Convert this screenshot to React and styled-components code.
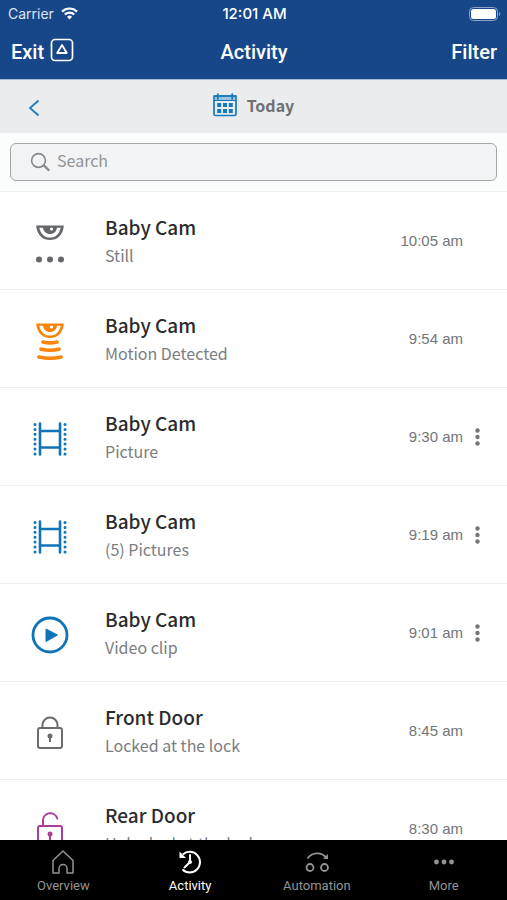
import React, { useState } from "react";
import styled, { createGlobalStyle } from "styled-components";

const GlobalStyle = createGlobalStyle`
  * {
    box-sizing: border-box;
  }

  body {
    margin: 0;
    background: #ffffff;
    font-family: "Noto Sans CJK SC", "Noto Sans", sans-serif;
  }

  button, input {
    font: inherit;
    color: inherit;
  }

  svg {
    display: block;
    flex-shrink: 0;
  }
`;

const Screen = styled.div`
  display: flex;
  flex-direction: column;
  height: 100vh;
  overflow: hidden;
`;

const Header = styled.header`
  background: #174789;
  color: #ffffff;
  border-bottom: 1px solid #9fbcdc;
`;

const StatusBar = styled.div`
  display: grid;
  grid-template-columns: 1fr auto 1fr;
  align-items: center;
  height: 27px;
  padding: 0 6px 0 8px;
  font-family: Inter, "Liberation Sans", sans-serif;
  font-size: 14px;
`;

const Carrier = styled.div`
  display: flex;
  align-items: center;
  gap: 7px;
  color: #dbe5f2;
`;

const Clock = styled.div`
  font-size: 15px;
  font-weight: 500;
`;

const Battery = styled.div`
  justify-self: end;
`;

const NavBar = styled.div`
  display: grid;
  grid-template-columns: 1fr auto 1fr;
  align-items: center;
  height: 52px;
  padding: 0 10px 2px 11px;
`;

const NavButton = styled.button`
  display: flex;
  align-items: center;
  gap: 6px;
  justify-self: ${(props) => (props.$end ? "end" : "start")};
  padding: 0;
  border: 0;
  background: none;
  font-family: Roboto, sans-serif;
  font-size: 20px;
  font-weight: 500;
  line-height: 24px;

  svg {
    margin-bottom: 5px;
  }
`;

const Title = styled.h1`
  margin: 0;
  font-family: Roboto, sans-serif;
  font-size: 20px;
  font-weight: 500;
  line-height: 24px;
`;

const DateBar = styled.div`
  display: grid;
  grid-template-columns: 1fr auto 1fr;
  align-items: center;
  height: 53px;
  padding: 0 20px;
  background: #ebecee;
`;

const BackButton = styled.button`
  justify-self: start;
  padding: 10px 8px 8px;
  border: 0;
  background: none;
`;

const DateButton = styled.button`
  display: flex;
  align-items: center;
  gap: 10px;
  padding: 0 0 3px;
  border: 0;
  background: none;
  color: #6f7173;
  font-size: 16px;
  font-weight: 700;
  line-height: 24px;
`;

const SearchArea = styled.div`
  padding: 10px;
  background: #fbfcfc;
  border-bottom: 1px solid #f0f1f1;
`;

const SearchBox = styled.label`
  display: flex;
  align-items: center;
  gap: 7px;
  height: 38px;
  padding: 0 19px;
  border: 1px solid #a3a5a6;
  border-radius: 6px;
  background: #f2f3f4;
`;

const SearchInput = styled.input`
  flex: 1;
  min-width: 0;
  padding: 0 0 4px;
  border: 0;
  outline: 0;
  background: none;
  font-size: 16px;
  line-height: 24px;
  color: #55585a;

  &::placeholder {
    color: #929496;
    opacity: 1;
  }
`;

const List = styled.ul`
  flex: 1;
  min-height: 0;
  margin: 0;
  padding: 0;
  overflow: hidden;
  list-style: none;
`;

const Row = styled.li`
  display: grid;
  grid-template-columns: 100px 1fr auto 44px;
  align-items: center;
  height: 98px;
  border-bottom: 1px solid #eeefef;
`;

const RowIcon = styled.div`
  display: flex;
  justify-content: center;
  padding-top: 4px;
`;

const RowText = styled.div`
  padding-left: 5px;
`;

const RowTitle = styled.div`
  font-size: 19px;
  font-weight: 500;
  line-height: 29px;
  color: #2a2b2d;
`;

const RowDetail = styled.div`
  font-size: 16px;
  line-height: 29px;
  color: #7b7d80;
`;

const Time = styled.time`
  font-family: "Liberation Sans", sans-serif;
  font-size: 15px;
  color: #737578;
`;

const MenuButton = styled.button`
  justify-self: start;
  padding: 8px 12px;
  border: 0;
  background: none;
`;

const TabBar = styled.nav`
  display: grid;
  grid-template-columns: repeat(4, 1fr);
  height: 60px;
  background: #000000;
`;

const Tab = styled.a`
  display: flex;
  flex-direction: column;
  align-items: center;
  gap: 3px;
  padding-top: 9px;
  color: ${(props) => (props.$active ? "#ffffff" : "#949494")};
  font-family: Roboto, sans-serif;
  font-size: 13px;
  line-height: 16px;
  text-decoration: none;
`;

const WifiIcon = () => (
  <svg width="17" height="13" viewBox="0 0 17 13" fill="none" stroke="#fff" strokeWidth="2.2">
    <path d="M1 4.6a10.6 10.6 0 0 1 15 0" />
    <path d="M3.8 7.5a6.6 6.6 0 0 1 9.4 0" />
    <path d="M8.5 12.4 6 9.7a3.7 3.7 0 0 1 5 0z" fill="#fff" stroke="none" />
  </svg>
);

const BatteryIcon = () => (
  <svg width="32" height="14" viewBox="0 0 32 14" fill="none">
    <rect x="0.5" y="0.5" width="28" height="13" rx="4" stroke="#8ba3c4" />
    <rect x="2" y="2" width="25" height="10" rx="2.5" fill="#fff" />
    <path d="M30 5v4c1.6-.8 1.6-3.2 0-4z" fill="#8ba3c4" />
  </svg>
);

const ExitIcon = () => (
  <svg width="24" height="24" viewBox="0 0 24 24" fill="none" stroke="#fff">
    <rect x="1.5" y="1.5" width="21" height="21" rx="3.5" strokeWidth="1.7" />
    <path d="M12 7l4.8 8H7.2z" strokeWidth="1.8" strokeLinejoin="round" />
  </svg>
);

const BackIcon = () => (
  <svg width="12" height="18" viewBox="0 0 12 18" fill="none" stroke="#1779bd" strokeWidth="1.7">
    <path d="M10.500 1.500 2 9l8.500 7.500" />
  </svg>
);

const CalendarIcon = () => (
  <svg width="24" height="24" viewBox="0 0 24 24" fill="#1779bd">
    <rect x="1" y="3" width="22" height="19.500" rx="1.500" fill="none" stroke="#1779bd" strokeWidth="1.700" />
    <path d="M2 4h20v3.500H2z" fill="#9cc4e2" />
    <path d="M1 3h22M4.800 1v5M19.200 1v5" stroke="#1779bd" strokeWidth="1.700" strokeLinecap="round" />
    <path d="M1 7.500h22" stroke="#1779bd" />
    {[4.2, 10, 15.8].map((x) => (
      <g key={x}>
        <rect x={x} y="10" width="4" height="4" />
        <rect x={x} y="16" width="4" height="4" />
      </g>
    ))}
  </svg>
);

const SearchIcon = () => (
  <svg width="20" height="20" viewBox="0 0 20 20" fill="none" stroke="#86888a">
    <circle cx="8.5" cy="8.5" r="6.9" strokeWidth="1.6" />
    <path d="M14 13.500l4.500 4.500" strokeWidth="2.400" strokeLinecap="round" />
  </svg>
);

const Eye = () => (
  <>
    <path d="M6.300 2.500h27.400v1.500C32.500 12.500 27 17 20 17S7.500 12.500 6.300 4z" fill="currentColor" />
    <path d="M9.300 4.800h21.400C29.300 11.200 25.500 14.600 20 14.600S10.700 11.200 9.300 4.800z" fill="#fff" />
    <path d="M12.800 4h14.400C26.500 8.500 24 11 20 11s-6.500-2.500-7.200-7z" fill="currentColor" />
    <circle cx="21.500" cy="6" r="1.600" fill="#fff" />
  </>
);

const StillIcon = () => (
  <svg width="40" height="40" viewBox="0 0 40 40" color="#65676a">
    <Eye />
    <g fill="currentColor">
      <circle cx="9" cy="36.500" r="3" />
      <circle cx="20" cy="36.500" r="3" />
      <circle cx="31" cy="36.500" r="3" />
    </g>
  </svg>
);

const MotionIcon = () => (
  <svg width="40" height="40" viewBox="0 0 40 40" color="#f88408">
    <Eye />
    <g fill="none" stroke="currentColor" strokeWidth="3.6" strokeLinecap="round">
      <path d="M13 21q7 1.800 14 0" />
      <path d="M11 28.200q9 2.200 18 0" />
      <path d="M9 36q11 2.600 22 0" />
    </g>
  </svg>
);

const FilmIcon = () => (
  <svg width="40" height="40" viewBox="0 0 40 40" fill="none" stroke="#0f74b8">
    <path d="M10 4.500v31M30 4.500v31" strokeWidth="2.600" strokeLinecap="round" />
    <path d="M10 12h20M10 28.500h20" strokeWidth="2.600" />
    <path d="M5 5.500v30M35 5.500v30" strokeWidth="3" strokeLinecap="round" strokeDasharray="0 4.900" />
  </svg>
);

const ClipIcon = () => (
  <svg width="40" height="40" viewBox="0 0 40 40">
    <circle cx="20" cy="20" r="17" fill="none" stroke="#0f74b8" strokeWidth="2.800" />
    <path d="M16 14l11.500 6L16 26.500z" fill="#0f74b8" stroke="#0f74b8" strokeLinejoin="round" />
  </svg>
);

const LockIcon = ({ color, open }) => (
  <svg width="40" height="40" viewBox="0 0 40 40" fill="none" stroke={color} strokeWidth="2">
    <rect x="8" y="15" width="24" height="20" rx="2" />
    <path d={open ? "M13 15v-6a7.300 7.300 0 0 1 14.300-1.500" : "M12.500 15v-3a7.500 7.500 0 0 1 15 0v3"} strokeLinecap="round" />
    <circle cx="20" cy="23" r="2.500" fill={color} stroke="none" />
    <path d="M20 23v6" />
  </svg>
);

const KebabIcon = () => (
  <svg width="5" height="18" viewBox="0 0 5 18" fill="#737578">
    <circle cx="2.500" cy="2.500" r="2.200" />
    <circle cx="2.500" cy="9" r="2.200" />
    <circle cx="2.500" cy="15.500" r="2.200" />
  </svg>
);

const HomeIcon = () => (
  <svg width="26" height="26" viewBox="0 0 26 26" fill="none" stroke="currentColor" strokeWidth="1.500" strokeLinejoin="round">
    <path d="M3 11.500 13 2l10 9.500V24h-6v-4.500a4 4 0 0 0-8 0V24H3z" />
  </svg>
);

const HistoryIcon = () => (
  <svg width="26" height="26" viewBox="0 0 26 26" fill="none" stroke="currentColor" strokeWidth="2">
    <path d="M5.800 5.500A10.300 10.300 0 1 1 5.500 20.500" />
    <path d="M2.500 2.500v6.500H9z" fill="currentColor" stroke="none" />
    <path d="M13 6v7l-5.500 5.500" strokeLinecap="round" />
    <circle cx="13" cy="13" r="2" fill="currentColor" stroke="none" />
  </svg>
);

const AutomationIcon = () => (
  <svg width="26" height="26" viewBox="0 0 26 26" fill="none" stroke="currentColor" strokeWidth="1.800">
    <path d="M3.500 9.500c4.500-6.500 14-7 19-.5" />
    <path d="M24 5v5h-5z" fill="currentColor" stroke="none" />
    <circle cx="6" cy="18.500" r="3.500" />
    <circle cx="20.500" cy="18.500" r="3.500" />
  </svg>
);

const MoreIcon = () => (
  <svg width="26" height="26" viewBox="0 0 26 26" fill="currentColor">
    <circle cx="5.500" cy="13" r="2.400" />
    <circle cx="13" cy="13" r="2.400" />
    <circle cx="20.500" cy="13" r="2.400" />
  </svg>
);

const events = [
  { title: "Baby Cam", detail: "Still", time: "10:05 am", icon: <StillIcon /> },
  { title: "Baby Cam", detail: "Motion Detected", time: "9:54 am", icon: <MotionIcon /> },
  { title: "Baby Cam", detail: "Picture", time: "9:30 am", icon: <FilmIcon />, menu: true },
  { title: "Baby Cam", detail: "(5) Pictures", time: "9:19 am", icon: <FilmIcon />, menu: true },
  { title: "Baby Cam", detail: "Video clip", time: "9:01 am", icon: <ClipIcon />, menu: true },
  { title: "Front Door", detail: "Locked at the lock", time: "8:45 am", icon: <LockIcon color="#696b6e" /> },
  { title: "Rear Door", detail: "Unlocked at the lock", time: "8:30 am", icon: <LockIcon color="#ad3d9a" open /> },
];

const tabs = [
  { label: "Overview", icon: <HomeIcon /> },
  { label: "Activity", icon: <HistoryIcon /> },
  { label: "Automation", icon: <AutomationIcon /> },
  { label: "More", icon: <MoreIcon /> },
];

const App = () => {
  const [search, setSearch] = useState("");
  const [activeTab, setActiveTab] = useState("Activity");

  return (
    <Screen>
      <GlobalStyle />
      <Header>
        <StatusBar>
          <Carrier>
            Carrier
            <WifiIcon />
          </Carrier>
          <Clock>12:01 AM</Clock>
          <Battery>
            <BatteryIcon />
          </Battery>
        </StatusBar>
        <NavBar>
          <NavButton type="button">
            Exit
            <ExitIcon />
          </NavButton>
          <Title>Activity</Title>
          <NavButton type="button" $end>
            Filter
          </NavButton>
        </NavBar>
      </Header>
      <DateBar>
        <BackButton type="button" aria-label="Previous day">
          <BackIcon />
        </BackButton>
        <DateButton type="button">
          <CalendarIcon />
          Today
        </DateButton>
      </DateBar>
      <SearchArea>
        <SearchBox>
          <SearchIcon />
          <SearchInput
            type="text"
            placeholder="Search"
            aria-label="Search"
            value={search}
            onChange={(e) => setSearch(e.target.value)}
          />
        </SearchBox>
      </SearchArea>
      <List>
        {events.map((event) => (
          <Row key={event.time}>
            <RowIcon>{event.icon}</RowIcon>
            <RowText>
              <RowTitle>{event.title}</RowTitle>
              <RowDetail>{event.detail}</RowDetail>
            </RowText>
            <Time>{event.time}</Time>
            {event.menu && (
              <MenuButton type="button" aria-label="Event options">
                <KebabIcon />
              </MenuButton>
            )}
          </Row>
        ))}
      </List>
      <TabBar>
        {tabs.map((tab) => (
          <Tab
            key={tab.label}
            href={"#" + tab.label.toLowerCase()}
            $active={tab.label === activeTab}
            onClick={() => setActiveTab(tab.label)}
          >
            {tab.icon}
            {tab.label}
          </Tab>
        ))}
      </TabBar>
    </Screen>
  );
};

export default App;
